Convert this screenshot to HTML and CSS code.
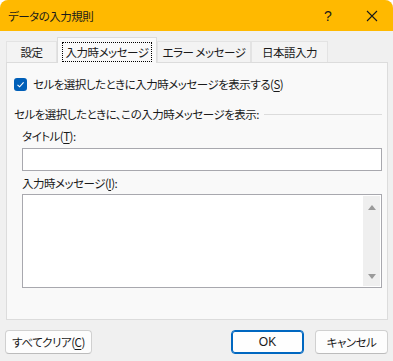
FILE: index.html
```html
<!DOCTYPE html>
<html lang="ja">
<head>
<meta charset="utf-8">
<link rel="stylesheet" href="styles.css">
</head>
<body>
<div class="window">
  <div class="titlebar">
    <span class="title">データの入力規則</span>
    <span class="help">?</span>
    <span class="close">
      <svg width="12" height="12" viewBox="0 0 12 12"><path d="M1 1 L11 11 M11 1 L1 11" stroke="#1a1a1a" stroke-width="1.1" fill="none"/></svg>
    </span>
  </div>
  <div class="content">
    <div class="tabs">
      <div class="tab t1">設定</div>
      <div class="tab active t2"><span class="focus">入力時メッセージ</span></div>
      <div class="tab t3">エラー メッセージ</div>
      <div class="tab t4">日本語入力</div>
    </div>
    <div class="panel">
      <label class="check-row">
        <span class="checkbox">
          <svg width="9" height="9" viewBox="0 0 9 9"><path d="M1.5 4.8 L3.6 6.8 L7.6 2.4" stroke="#fff" stroke-width="1.1" fill="none"/></svg>
        </span>
        <span>セルを選択したときに入力時メッセージを表示する(<u>S</u>)</span>
      </label>
      <div class="group">
        <span class="group-label">セルを選択したときに、この入力時メッセージを表示:</span>
        <span class="group-line"></span>
      </div>
      <div class="field-label">タイトル(<u>T</u>):</div>
      <div class="textbox"></div>
      <div class="field-label">入力時メッセージ(<u>I</u>):</div>
      <div class="textarea">
        <div class="scrollbar">
          <span class="arrow up"></span>
          <span class="arrow down"></span>
        </div>
      </div>
    </div>
    <div class="buttons">
      <button class="btn clear">すべてクリア(<u>C</u>)</button>
      <span class="spacer"></span>
      <button class="btn ok">OK</button>
      <button class="btn cancel">キャンセル</button>
    </div>
  </div>
</div>
</body>
</html>
```
FILE: styles.css
```css
* { box-sizing: border-box; }
html, body { margin: 0; padding: 0; }
body {
  width: 393px;
  height: 361px;
  overflow: hidden;
  background: #ffffff;
  font-family: "Noto Sans CJK JP", "Noto Sans", sans-serif;
  font-feature-settings: "palt";
  font-size: 11.5px;
  letter-spacing: -0.5px;
  color: #1a1a1a;
}
.window {
  width: 393px;
  height: 361px;
  background: #f0f0f0;
  border-radius: 8px 8px 0 0;
  overflow: hidden;
  display: flex;
  flex-direction: column;
}
.titlebar {
  height: 31px;
  flex: none;
  background: #ffb900;
  display: flex;
  align-items: center;
  padding-left: 8px;
}
.title { flex: 1; }
.help { width: 16px; text-align: center; font-family: "Liberation Sans", sans-serif; font-size: 14px; margin-right: 28px; letter-spacing: 0; }
.close { width: 16px; display: flex; justify-content: center; margin-right: 13px; }
.content {
  padding: 6px 5px 0 6px;
  display: flex;
  flex-direction: column;
}
.tabs {
  display: flex;
  align-items: flex-end;
  height: 25px;
  position: relative;
  z-index: 1;
}
.tab {
  height: 21px;
  background: #f3f3f3;
  border: 1px solid #e3e3e3;
  border-bottom: none;
  display: flex;
  align-items: center;
  justify-content: center;
  white-space: nowrap;
}
.t1 { width: 51px; }
.t2 { width: 100px; }
.t3 { width: 94px; }
.t4 { width: 77px; }
.tab.active {
  height: 26px;
  margin-bottom: -1px;
  background: #f9f9f9;
  border-color: #dcdcdc;
  padding: 4px 4px 2px;
}
.focus {
  border: 1px dotted #000;
  width: 91px;
  height: 20px;
  display: flex;
  align-items: center;
  justify-content: center;
}
.panel {
  height: 258px;
  width: 382px;
  background: #f9f9f9;
  border: 1px solid #dcdcdc;
  padding: 14px 0 0 7px;
  display: flex;
  flex-direction: column;
}
.check-row {
  display: flex;
  align-items: center;
  gap: 6px;
  height: 14px;
}
.checkbox {
  width: 13px;
  height: 13px;
  border-radius: 3px;
  background: #005fb8;
  display: flex;
  align-items: center;
  justify-content: center;
}
.group {
  display: flex;
  align-items: center;
  margin-top: 16px;
  height: 14px;
}
.group-line {
  flex: 1;
  height: 1px;
  background: #dcdcdc;
  margin: 0 5px 0 5px;
}
.field-label {
  margin-left: 8px;
  height: 14px;
  line-height: 14px;
}
.group + .field-label { margin-top: 8px; }
.textbox {
  margin: 5px 0 0 8px;
  width: 360px;
  height: 23px;
  background: #fff;
  border: 1px solid #a8a8ae;
}
.textbox + .field-label { margin-top: 5px; }
.textarea {
  margin: 4px 0 0 8px;
  width: 360px;
  height: 94px;
  background: #fff;
  border: 1px solid #a8a8ae;
  display: flex;
  justify-content: flex-end;
  padding: 1px;
}
.scrollbar {
  width: 17px;
  height: 100%;
  background: #efefef;
  display: flex;
  flex-direction: column;
  justify-content: space-between;
  align-items: center;
  padding: 9px 0 7px;
}
.arrow {
  width: 0;
  height: 0;
  border-left: 4px solid transparent;
  border-right: 4px solid transparent;
}
.arrow.up { border-bottom: 5px solid #9a9a9a; }
.arrow.down { border-top: 5px solid #9a9a9a; }
.buttons {
  display: flex;
  margin-top: 10px;
  margin-left: -1px;
  height: 24px;
}
.spacer { flex: 1; }
.btn {
  font-family: "Noto Sans CJK JP", "Noto Sans", sans-serif;
  font-feature-settings: "palt";
  font-size: 11.5px;
  letter-spacing: -0.5px;
  color: #1a1a1a;
  background: #fdfdfd;
  border: 1px solid #d0d0d0;
  border-bottom-color: #bcbcbc;
  border-radius: 4px;
  height: 24px;
  padding: 0;
}
.clear { width: 87px; }
.ok {
  width: 73px;
  border: 1px solid #0067c0;
  box-shadow: inset 0 0 0 1px #0067c0;
  background: #fefefe;
  font-family: "Liberation Sans", sans-serif;
  font-size: 12px;
  letter-spacing: 0;
  margin-right: 11px;
}
.cancel { width: 73px; }
u { text-decoration: underline; text-underline-offset: 2px; }
```
